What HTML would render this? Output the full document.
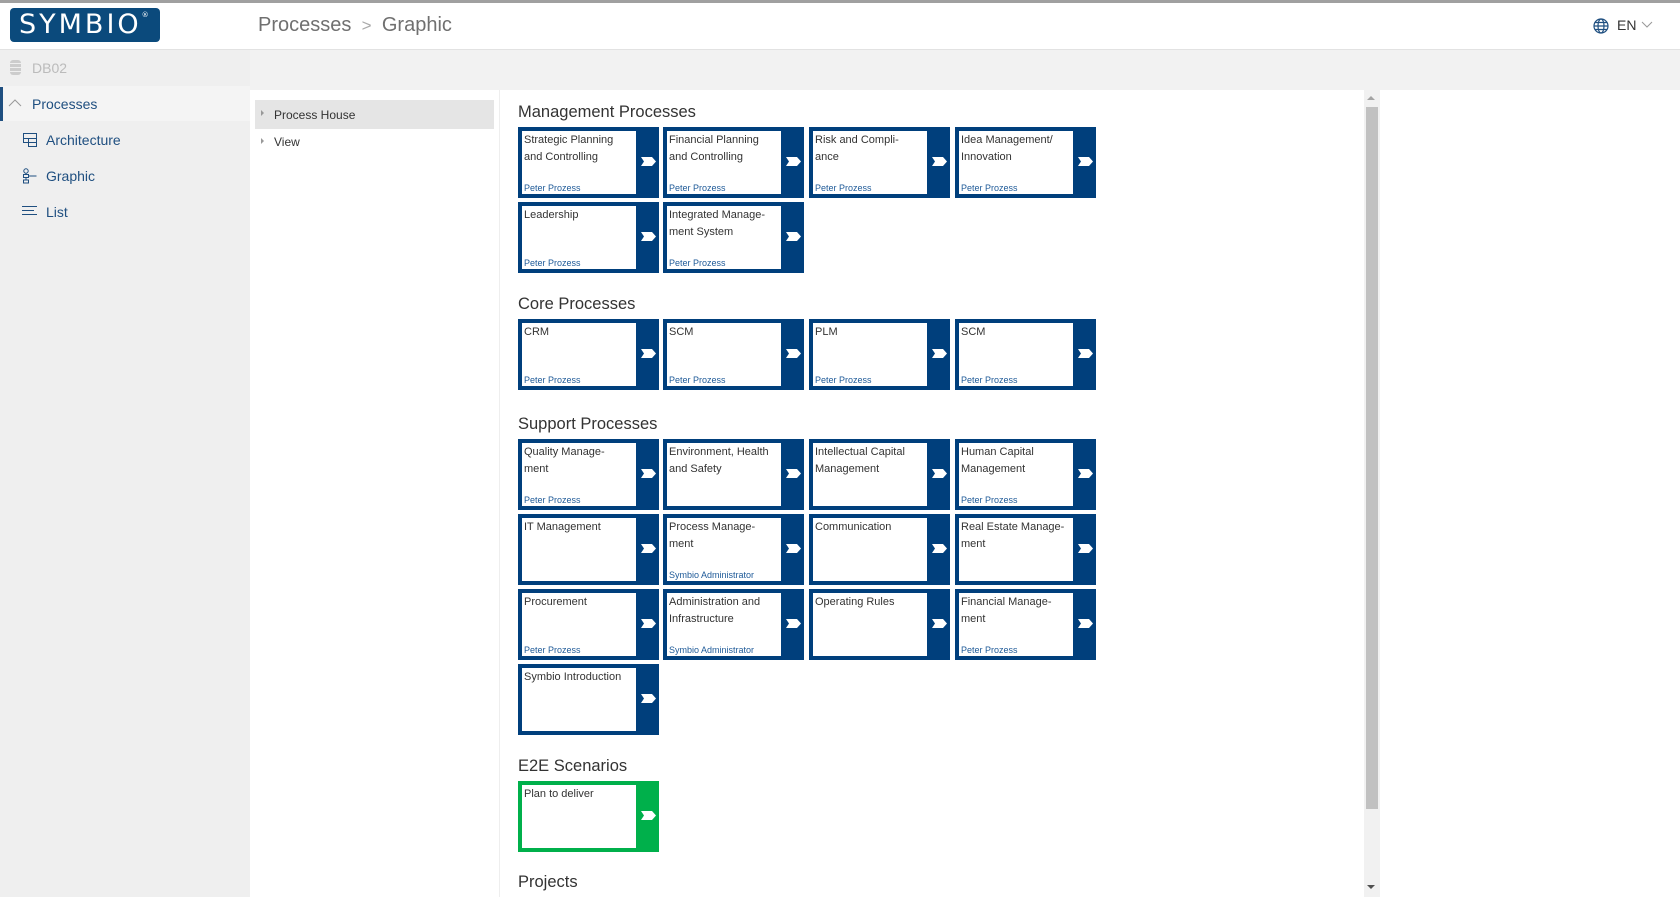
<!DOCTYPE html>
<html><head><meta charset="utf-8"><style>
*{margin:0;padding:0;box-sizing:border-box}
body{width:1680px;height:897px;overflow:hidden;background:#fff;font-family:"Liberation Sans",sans-serif;position:relative;color:#333}
.a{position:absolute}
.tile{position:absolute;width:141px;height:71px;background:#003f7c}
.tile .in{position:absolute;left:4px;top:4px;width:114px;height:63px;background:#fff}
.tile .t{position:absolute;left:2px;top:1px;font-size:11px;line-height:17px;color:#333;width:112px}
.tile .p{position:absolute;left:2px;bottom:1px;font-size:9px;color:#1e5a98}
.tile svg{position:absolute;left:123px;top:30px}
.h{position:absolute;left:518px;font-size:16.5px;color:#333}
.nav{position:absolute;font-size:14px;color:#1f4f80}
</style></head><body>
<div class="a" style="left:0;top:0;width:1680px;height:3px;background:#a0a0a0"></div>
<div class="a" style="left:0;top:49px;width:1680px;height:1px;background:#e2e2e2"></div>
<div class="a" style="left:10px;top:8px;width:150px;height:34px;background:#0b4a7c;border-radius:4px;color:#fff;font-size:27px;letter-spacing:3px;line-height:34px;padding-left:9px;font-family:'DejaVu Sans',sans-serif">SYMBIO<span style="font-size:7px;vertical-align:top;line-height:14px">®</span></div>
<div class="a" style="left:258px;top:14px;font-size:20px;color:#707070">Processes <span style="color:#aaa;font-size:17px">&nbsp;&gt;&nbsp;</span> Graphic</div>
<svg class="a" style="left:1593px;top:18px" width="16" height="16" viewBox="0 0 16 16" fill="none" stroke="#1f4f80" stroke-width="1.2"><circle cx="8" cy="8" r="7"/><ellipse cx="8" cy="8" rx="3" ry="7"/><path d="M1 8h14M2 4.5h12M2 11.5h12"/></svg>
<div class="a" style="left:1617px;top:17px;font-size:14px;color:#333">EN</div>
<svg class="a" style="left:1641px;top:21px" width="12" height="8"><path d="M1 1l5 5 5-5" stroke="#999" fill="none"/></svg>
<div class="a" style="left:0;top:50px;width:250px;height:847px;background:#efefef"></div>
<div class="a" style="left:0;top:86px;width:250px;height:35px;background:#f4f4f4"></div>
<div class="a" style="left:0;top:87px;width:3px;height:34px;background:#1f4f80"></div>
<div class="a" style="left:10px;top:60px;width:11px;height:15px;background:repeating-linear-gradient(#ccc 0 3px,#efefef 3px 4px);border-radius:3px"></div>
<div class="nav" style="left:32px;top:60px;color:#bbb">DB02</div>
<svg class="a" style="left:8px;top:98px" width="14" height="10"><path d="M1 8l6-6 6 6" stroke="#999" fill="none"/></svg>
<div class="nav" style="left:32px;top:96px">Processes</div>
<svg class="a" style="left:22px;top:132px" width="16" height="16" fill="none" stroke="#1f4f80"><path d="M1.5 1.5h13v5h-13zM1.5 6.5v4h5v-4M6.5 10.5v4h8v-8M6.5 10.5h8"/></svg>
<div class="nav" style="left:46px;top:132px">Architecture</div>
<svg class="a" style="left:22px;top:168px" width="16" height="16" fill="none" stroke="#1f4f80"><circle cx="4" cy="3" r="2.2"/><rect x="1.5" y="6.5" width="5" height="3"/><rect x="1.5" y="12" width="5" height="3"/><path d="M6.5 8h8M4 5v1.5M4 9.5v2.5"/></svg>
<div class="nav" style="left:46px;top:168px">Graphic</div>
<svg class="a" style="left:22px;top:205px" width="16" height="12" stroke="#1f4f80"><path d="M0 1.5h15M0 5.5h12M0 9.5h15"/></svg>
<div class="nav" style="left:46px;top:204px">List</div>
<div class="a" style="left:250px;top:50px;width:1430px;height:40px;background:#f2f2f2"></div>
<div class="a" style="left:499px;top:90px;width:1px;height:807px;background:#eee"></div>
<div class="a" style="left:255px;top:100px;width:239px;height:29px;background:#e5e5e5"></div>
<div class="a" style="left:261px;top:110px;width:0;height:0;border-left:3px solid #999;border-top:3px solid transparent;border-bottom:3px solid transparent"></div>
<div class="a" style="left:274px;top:108px;font-size:12px;color:#333">Process House</div>
<div class="a" style="left:261px;top:138px;width:0;height:0;border-left:3px solid #999;border-top:3px solid transparent;border-bottom:3px solid transparent"></div>
<div class="a" style="left:274px;top:135px;font-size:12px;color:#333">View</div>
<div class="a" style="left:1364px;top:90px;width:16px;height:807px;background:#f1f1f1"></div>
<div class="a" style="left:1366px;top:107px;width:12px;height:702px;background:#c1c1c1"></div>
<div class="a" style="left:1367px;top:96px;border-left:4px solid transparent;border-right:4px solid transparent;border-bottom:4px solid #a3a3a3"></div>
<div class="a" style="left:1367px;top:885px;border-left:4px solid transparent;border-right:4px solid transparent;border-top:4px solid #505050"></div>

<div class="h" style="top:103px">Management Processes</div>
<div class="h" style="top:295px">Core Processes</div>
<div class="h" style="top:415px">Support Processes</div>
<div class="h" style="top:757px">E2E Scenarios</div>
<div class="h" style="top:873px">Projects</div>

<div id="tiles"></div>
<script>
var A='<svg width="15" height="9"><path d="M0 0h11l4 4.5-4 4.5H0l3-4.5z" fill="#fff"/></svg>';
var X=[518,663,809,955];
var d=[
[0,127,"Strategic Planning<br>and Controlling","Peter Prozess"],[1,127,"Financial Planning<br>and Controlling","Peter Prozess"],[2,127,"Risk and Compli-<br>ance","Peter Prozess"],[3,127,"Idea Management/<br>Innovation","Peter Prozess"],
[0,202,"Leadership","Peter Prozess"],[1,202,"Integrated Manage-<br>ment System","Peter Prozess"],
[0,319,"CRM","Peter Prozess"],[1,319,"SCM","Peter Prozess"],[2,319,"PLM","Peter Prozess"],[3,319,"SCM","Peter Prozess"],
[0,439,"Quality Manage-<br>ment","Peter Prozess"],[1,439,"Environment, Health<br>and Safety",""],[2,439,"Intellectual Capital<br>Management",""],[3,439,"Human Capital<br>Management","Peter Prozess"],
[0,514,"IT Management",""],[1,514,"Process Manage-<br>ment","Symbio Administrator"],[2,514,"Communication",""],[3,514,"Real Estate Manage-<br>ment",""],
[0,589,"Procurement","Peter Prozess"],[1,589,"Administration and<br>Infrastructure","Symbio Administrator"],[2,589,"Operating Rules",""],[3,589,"Financial Manage-<br>ment","Peter Prozess"],
[0,664,"Symbio Introduction",""],
[0,781,"Plan to deliver","",1]];
var h='';
d.forEach(function(t){h+='<div class="tile" style="left:'+X[t[0]]+'px;top:'+t[1]+'px;'+(t[4]?'background:#00b04b':'')+'"><div class="in"><div class="t">'+t[2]+'</div><div class="p">'+t[3]+'</div></div>'+A+'</div>';});
document.getElementById('tiles').innerHTML=h;
</script>
</body></html>
